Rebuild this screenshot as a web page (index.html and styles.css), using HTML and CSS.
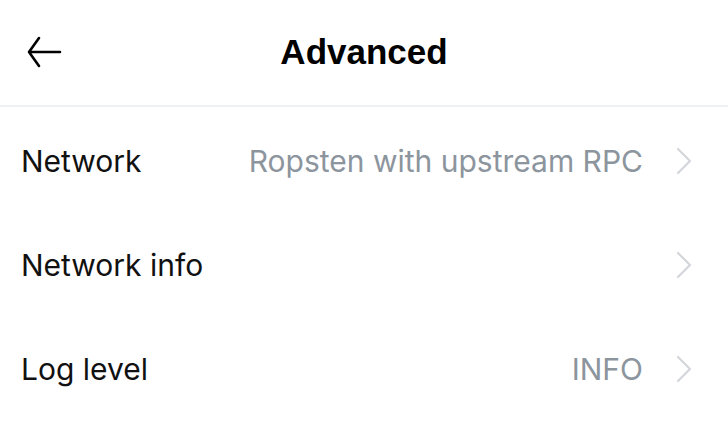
FILE: index.html
```html
<!DOCTYPE html>
<html>
<head>
<meta charset="utf-8">
<link rel="stylesheet" href="styles.css">
</head>
<body>
<div class="screen">
  <header class="header">
    <div class="back">
      <svg width="36" height="32" viewBox="0 0 36 32" fill="none" stroke="#000" stroke-width="2.6" stroke-linecap="round" stroke-linejoin="round">
        <path d="M34 16H3M13 2L3 16l10 14"/>
      </svg>
    </div>
    <h1 class="title">Advanced</h1>
    <div class="spacer"></div>
  </header>
  <ul class="list">
    <li class="row">
      <span class="label">Network</span>
      <span class="value">Ropsten with upstream RPC</span>
      <span class="chev"><svg width="16" height="28" viewBox="0 0 16 28" fill="none" stroke="#d3d6da" stroke-width="2.2" stroke-linecap="round" stroke-linejoin="round"><path d="M2 2l12 12L2 26"/></svg></span>
    </li>
    <li class="row">
      <span class="label">Network info</span>
      <span class="value"></span>
      <span class="chev"><svg width="16" height="28" viewBox="0 0 16 28" fill="none" stroke="#d3d6da" stroke-width="2.2" stroke-linecap="round" stroke-linejoin="round"><path d="M2 2l12 12L2 26"/></svg></span>
    </li>
    <li class="row">
      <span class="label">Log level</span>
      <span class="value">INFO</span>
      <span class="chev"><svg width="16" height="28" viewBox="0 0 16 28" fill="none" stroke="#d3d6da" stroke-width="2.2" stroke-linecap="round" stroke-linejoin="round"><path d="M2 2l12 12L2 26"/></svg></span>
    </li>
  </ul>
</div>
</body>
</html>
```
FILE: styles.css
```css
html, body {
  margin: 0;
  padding: 0;
  background: #fff;
}
.screen {
  width: 728px;
  height: 422px;
  overflow: hidden;
  font-family: Inter, "Noto Sans", sans-serif;
}
.header {
  height: 105px;
  display: flex;
  align-items: center;
  padding: 0 26px;
  border-bottom: 2px solid #eef1f4;
}
.back {
  width: 60px;
  display: flex;
  align-items: center;
  margin-top: -2px;
}
.back svg { display: block; }
.title {
  flex: 1;
  margin: 0 0 2px 0;
  text-align: center;
  font-family: "Liberation Sans", Arial, sans-serif;
  font-weight: 700;
  font-size: 35px;
  color: #000;
}
.spacer { width: 60px; }
.list {
  list-style: none;
  margin: 0;
  padding: 2px 0 0 0;
}
.row {
  height: 104px;
  display: flex;
  align-items: center;
  padding: 0 36px 0 21px;
  font-size: 30px;
  color: #111;
}
.label { flex: 1; }
.value {
  color: #8c959d;
  margin-right: 33px;
}
.chev { display: flex; }
.chev svg { display: block; }
```
